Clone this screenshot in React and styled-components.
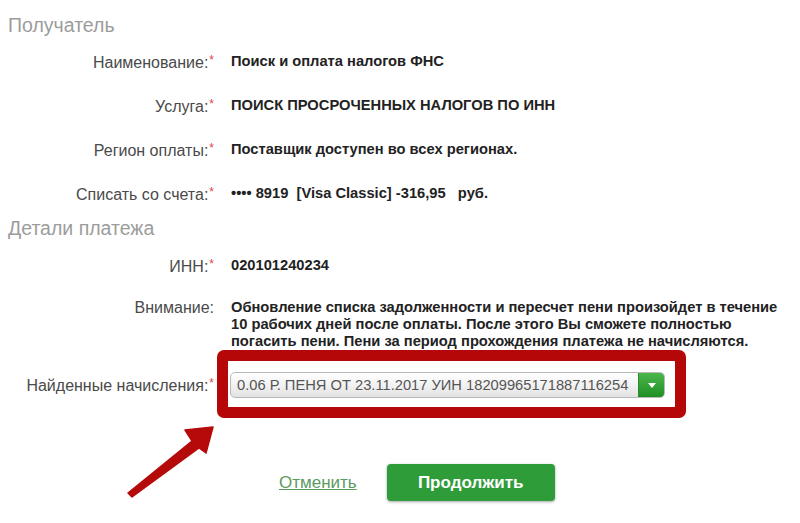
import React from 'react';
import styled, { createGlobalStyle } from 'styled-components';

const GlobalStyle = createGlobalStyle`
  body {
    margin: 0;
    background: #fff;
    font-family: 'Liberation Sans', Arial, sans-serif;
  }
`;

const Page = styled.div`
  position: relative;
  width: 800px;
  height: 523px;
  overflow: hidden;
  background: #fff;
`;

const SectionTitle = styled.h2`
  margin: ${({ $top }) => $top}px 0 0 8px;
  height: 26px;
  font-size: 19.5px;
  font-weight: 400;
  line-height: 26px;
  color: #9c9c9c;
`;

const Row = styled.div`
  display: flex;
  align-items: ${({ $multi }) => ($multi ? 'flex-start' : 'center')};
  min-height: ${({ $h }) => $h || 44}px;
  margin-top: ${({ $mt }) => $mt || 0}px;
  padding-top: ${({ $pt }) => $pt || 0}px;
`;

const Label = styled.div`
  flex: none;
  width: 214px;
  text-align: right;
  font-size: 16px;
  line-height: 17px;
  color: #4a4a4a;
`;

const Required = styled.span`
  color: #d9474a;
  font-size: 12px;
  vertical-align: 4px;
  margin-left: 1px;
`;

const Value = styled.div`
  margin-left: 17px;
  font-size: 14.7px;
  font-weight: 700;
  line-height: 17px;
  color: #222;
  white-space: pre;
`;

const Highlight = styled.div`
  margin-left: 3px;
  width: 435px;
  padding: 11px 10px 9px 2px;
  border: 11px solid #b50707;
  border-radius: 7px;
  background: #fff;
`;

const Select = styled.div`
  display: flex;
  align-items: center;
  height: 26px;
  box-sizing: border-box;
  border: 1px solid #b9b9b9;
  border-radius: 5px;
  background: linear-gradient(#ffffff, #f1f1f1 55%, #e2e2e2);
  box-shadow: inset 0 1px 0 #fff;
  overflow: hidden;
`;

const SelectText = styled.span`
  flex: 1;
  padding-left: 6px;
  font-size: 14.7px;
  color: #555;
  white-space: nowrap;
`;

const SelectButton = styled.span`
  flex: none;
  display: flex;
  align-items: center;
  justify-content: center;
  width: 25px;
  height: 100%;
  background: linear-gradient(#4cb64c, #1f8f24);
  border-left: 1px solid #2a8a2a;
`;

const Actions = styled.div`
  display: flex;
  align-items: center;
  gap: 30px;
  margin: 46px 0 0 279px;
`;

const CancelLink = styled.a`
  font-size: 17px;
  color: #5b9b5e;
  text-decoration: underline;
  cursor: pointer;
`;

const PrimaryButton = styled.button`
  width: 168px;
  height: 37px;
  border: none;
  border-radius: 4px;
  background: #2f9c3a;
  box-shadow: 0 1px 3px rgba(0, 0, 0, 0.35);
  color: #fff;
  font-family: 'Liberation Sans', Arial, sans-serif;
  font-size: 17px;
  font-weight: 700;
  cursor: pointer;
`;

const Pointer = styled.svg`
  position: absolute;
  left: 0;
  top: 0;
  pointer-events: none;
`;

const Field = ({ label, required = true, children, ...rest }) => (
  <Row {...rest}>
    <Label>
      {label}
      {required && <Required>*</Required>}
    </Label>
    {children}
  </Row>
);

export default function App() {
  return (
    <Page>
      <GlobalStyle />
      <SectionTitle $top={12}>Получатель</SectionTitle>
      <Field label="Наименование:" $mt={1}>
        <Value>Поиск и оплата налогов ФНС</Value>
      </Field>
      <Field label="Услуга:">
        <Value>ПОИСК ПРОСРОЧЕННЫХ НАЛОГОВ ПО ИНН</Value>
      </Field>
      <Field label="Регион оплаты:">
        <Value>Поставщик доступен во всех регионах.</Value>
      </Field>
      <Field label="Списать со счета:">
        <Value>{'•••• 8919  [Visa Classic] -316,95   руб.'}</Value>
      </Field>
      <SectionTitle $top={0}>Детали платежа</SectionTitle>
      <Field label="ИНН:" $mt={2}>
        <Value>020101240234</Value>
      </Field>
      <Field label="Внимание:" required={false} $multi $pt={12} $h={51}>
        <Value>
          Обновление списка задолженности и пересчет пени произойдет в течение
          <br />
          10 рабочих дней после оплаты. После этого Вы сможете полностью
          <br />
          погасить пени. Пени за период прохождения платежа не начисляются.
        </Value>
      </Field>
      <Field label="Найденные начисления:" $h={67}>
        <Highlight>
          <Select>
            <SelectText>0.06 Р. ПЕНЯ ОТ 23.11.2017 УИН 18209965171887116254</SelectText>
            <SelectButton>
              <svg width="10" height="7" viewBox="0 0 10 7">
                <path d="M1 1h8L5 6z" fill="#fff" />
              </svg>
            </SelectButton>
          </Select>
        </Highlight>
      </Field>
      <Actions>
        <CancelLink>Отменить</CancelLink>
        <PrimaryButton>Продолжить</PrimaryButton>
      </Actions>
      <Pointer width="800" height="523" viewBox="0 0 800 523">
        <polygon
          points="128,493 192,441 185,430 213,427 206,453 199,448 132,497"
          fill="#b50a0a"
          stroke="#b50a0a"
          strokeLinejoin="round"
          strokeWidth="1.5"
        />
      </Pointer>
    </Page>
  );
}
